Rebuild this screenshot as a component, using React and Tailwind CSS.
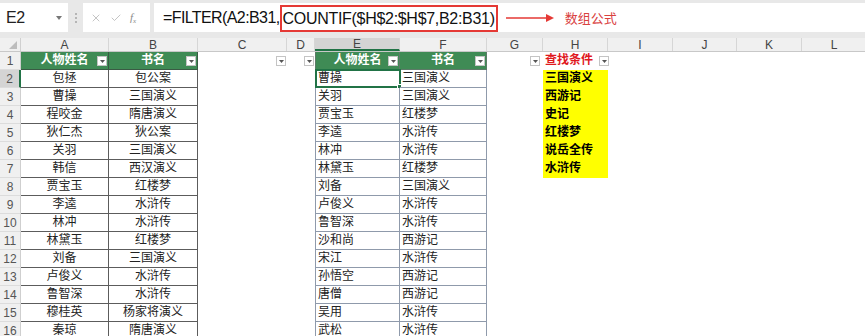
import React from 'react';
import { X, Check } from 'lucide-react';

const colW = ['w-[88px]', 'w-[89px]', 'w-[89px]', 'w-[28px]', 'w-[85px]', 'w-[87px]', 'w-[56px]', 'w-[65px]', 'w-[65px]', 'w-[64px]', 'w-[65px]', 'w-[65px]'];
const letters = ['A', 'B', 'C', 'D', 'E', 'F', 'G', 'H', 'I', 'J', 'K', 'L'];

const tableAB = [
  ['包拯', '包公案'],
  ['曹操', '三国演义'],
  ['程咬金', '隋唐演义'],
  ['狄仁杰', '狄公案'],
  ['关羽', '三国演义'],
  ['韩信', '西汉演义'],
  ['贾宝玉', '红楼梦'],
  ['李逵', '水浒传'],
  ['林冲', '水浒传'],
  ['林黛玉', '红楼梦'],
  ['刘备', '三国演义'],
  ['卢俊义', '水浒传'],
  ['鲁智深', '水浒传'],
  ['穆桂英', '杨家将演义'],
  ['秦琼', '隋唐演义'],
];

const tableEF = [
  ['曹操', '三国演义'],
  ['关羽', '三国演义'],
  ['贾宝玉', '红楼梦'],
  ['李逵', '水浒传'],
  ['林冲', '水浒传'],
  ['林黛玉', '红楼梦'],
  ['刘备', '三国演义'],
  ['卢俊义', '水浒传'],
  ['鲁智深', '水浒传'],
  ['沙和尚', '西游记'],
  ['宋江', '水浒传'],
  ['孙悟空', '西游记'],
  ['唐僧', '西游记'],
  ['吴用', '水浒传'],
  ['武松', '水浒传'],
];

const criteria = ['三国演义', '西游记', '史记', '红楼梦', '说岳全传', '水浒传'];

function FilterBtn({ className = '' }) {
  return (
    <div className={`absolute top-[4px] w-[10px] h-[10px] bg-white border border-[#c4c4c4] flex items-center justify-center ${className}`}>
      <svg width="5" height="3" viewBox="0 0 5 3">
        <polygon points="0,0 5,0 2.5,3" fill="#555" />
      </svg>
    </div>
  );
}

function RowHead({ n }) {
  const active = n === 2;
  return (
    <div
      className={`w-[21px] shrink-0 flex items-center justify-center text-[12px] text-[#555] border-b border-[#dcdcdc] ${
        active ? 'bg-[#d4d4d4] border-r-2 border-r-[#217346]' : 'bg-[#f0f0f0] border-r border-r-[#cfcfcf]'
      }`}
    >
      {n}
    </div>
  );
}

function Cell({ r, i }) {
  const w = colW[i];
  const base = `${w} shrink-0 h-[18px] leading-[17px] text-[12px] whitespace-nowrap`;
  // Table A/B
  if (i === 0 || i === 1) {
    if (r === 1) {
      return (
        <div className={`${base} relative bg-[#3f8b55] text-white font-bold text-center border-r border-b border-[#3a5a44]`}>
          {i === 0 ? '人物姓名' : '书名'}
          <FilterBtn className="right-[1px]" />
        </div>
      );
    }
    const row = tableAB[r - 2];
    return (
      <div className={`${base} text-center text-[#222] border-r border-b border-[#5c5c5c]`}>
        {row ? row[i] : ''}
      </div>
    );
  }
  // Table E/F
  if (i === 4 || i === 5) {
    const left = i === 4 ? 'border-l' : '';
    if (r === 1) {
      return (
        <div className={`${base} relative bg-[#3f8b55] text-white font-bold text-center border-r border-b ${left} border-[#5d7a68]`}>
          {i === 4 ? '人物姓名' : '书名'}
          <FilterBtn className="right-[1px]" />
        </div>
      );
    }
    const row = tableEF[r - 2];
    return (
      <div className={`${base} relative text-left pl-[2px] text-[#222] border-r border-b ${left} border-[#8f9aab]`}>
        {row ? row[i - 4] : ''}
        {i === 4 && r === 2 && (
          <div className="absolute -left-[1px] -top-[1px] w-[86px] h-[19px] border-2 border-[#217346]">
            <div className="absolute -right-[3px] -bottom-[3px] w-[5px] h-[5px] bg-[#217346] border border-white" />
          </div>
        )}
      </div>
    );
  }
  // C, D, G filter buttons in row 1
  if ((i === 2 || i === 3 || i === 6) && r === 1) {
    return (
      <div className={`${base} relative`}>
        <FilterBtn className={i === 6 ? 'right-[3px]' : 'right-[1px]'} />
      </div>
    );
  }
  // H column
  if (i === 7) {
    if (r === 1) {
      return (
        <div className={`${base} relative pl-[2px] text-[#e0191e] font-bold`}>
          查找条件
          <FilterBtn className="-right-[1px]" />
        </div>
      );
    }
    if (r >= 2 && r <= 7) {
      return (
        <div className={`${base} bg-[#ffff00] pl-[2px] font-bold text-black`}>
          {criteria[r - 2]}
        </div>
      );
    }
  }
  return <div className={base} />;
}

export default function App() {
  const rows = Array.from({ length: 16 }, (_, k) => k + 1);
  return (
    <div className="w-[865px] h-[336px] overflow-hidden bg-white font-['Liberation_Sans','Noto_Sans_CJK_SC',sans-serif]">
      {/* Formula bar */}
      <div className="h-[38px] bg-[#e8e8e8] flex items-start pt-[3px]">
        <div className="w-[68px] h-[29px] bg-white flex items-center pl-[6px] relative text-[16px] tracking-[-0.3px] text-[#222]">
          E2
          <svg className="absolute left-[56px] top-[13px]" width="6" height="4" viewBox="0 0 6 4">
            <polygon points="0,0 6,0 3,4" fill="#777" />
          </svg>
        </div>
        <div className="w-[15px] h-[29px] flex flex-col items-center justify-center gap-[2px]">
          <div className="w-[2px] h-[2px] bg-[#b5b5b5]" />
          <div className="w-[2px] h-[2px] bg-[#b5b5b5]" />
          <div className="w-[2px] h-[2px] bg-[#b5b5b5]" />
        </div>
        <div className="w-[67px] h-[29px] bg-white flex items-center pl-[7px] gap-[8px] text-[#b0b0b0]">
          <X size={12} strokeWidth={1.5} />
          <Check size={12} strokeWidth={1.5} />
          <span className="italic text-[11px] font-['Liberation_Serif',serif] text-[#8a8a8a]">f<sub className="text-[7px]">x</sub></span>
        </div>
        <div className="ml-[4px] flex-1 h-[29px] bg-white flex items-center pl-[9px] text-[16px] text-[#111] whitespace-nowrap">
          <span className="tracking-[-0.6px]">=FILTER(A2:B31,</span>
          <span className="h-[27px] mt-[2px] border-2 border-[#e53935] flex items-center px-[1px] tracking-[-0.3px]">COUNTIF($H$2:$H$7,B2:B31)</span>
          <svg className="ml-[8px]" width="48" height="8" viewBox="0 0 48 8">
            <line x1="0" y1="4" x2="41" y2="4" stroke="#e53935" strokeWidth="1.5" />
            <polygon points="40,0 48,4 40,8" fill="#e53935" />
          </svg>
          <span className="ml-[11px] text-[13px] tracking-normal text-[#d9413f] font-['Noto_Sans_CJK_SC',sans-serif]">数组公式</span>
        </div>
      </div>
      {/* Column headers */}
      <div className="flex h-[14px] bg-[#f0f0f0] border-b border-[#c8c8c8]">
        <div className="w-[21px] shrink-0 relative border-r border-[#d0d0d0]">
          <svg className="absolute right-[3px] bottom-[2px]" width="8" height="8" viewBox="0 0 8 8">
            <polygon points="8,0 8,8 0,8" fill="#bdbdbd" />
          </svg>
        </div>
        {letters.map((l, i) => (
          <div
            key={l}
            className={`${colW[i]} shrink-0 flex items-center justify-center text-[12px] leading-none text-[#444] border-r border-[#d6d6d6] ${
              l === 'E' ? 'bg-[#d4d4d4] border-b-2 border-b-[#217346]' : ''
            }`}
          >
            {l}
          </div>
        ))}
      </div>
      {/* Rows */}
      {rows.map((r) => (
        <div key={r} className="flex h-[18px]">
          <RowHead n={r} />
          {letters.map((l, i) => (
            <Cell key={l} r={r} i={i} />
          ))}
        </div>
      ))}
    </div>
  );
}
